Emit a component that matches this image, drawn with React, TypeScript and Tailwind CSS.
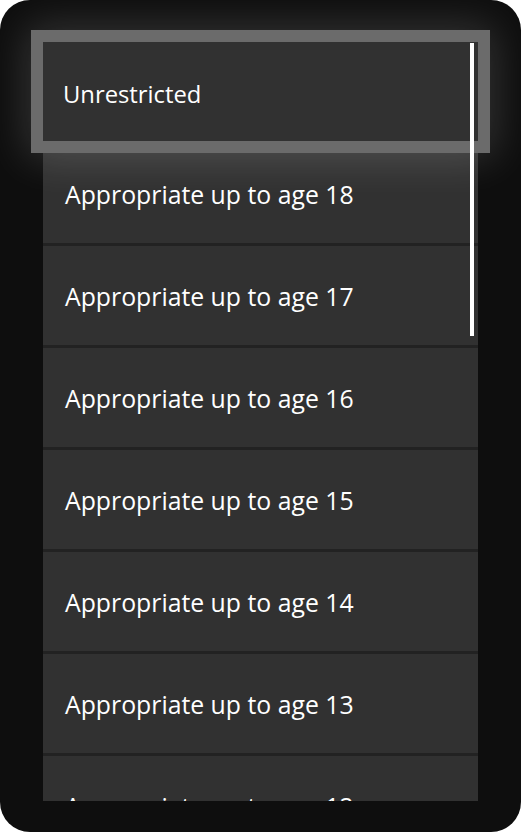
const ratings = [
  "Unrestricted",
  "Appropriate up to age 18",
  "Appropriate up to age 17",
  "Appropriate up to age 16",
  "Appropriate up to age 15",
  "Appropriate up to age 14",
  "Appropriate up to age 13",
  "Appropriate up to age 12",
]

export default function App() {
  return (
    <div className="w-[521px] h-[832px] bg-white" style={{ fontFamily: '"Open Sans", "Noto Sans", sans-serif' }}>
      <div className="relative w-full h-full rounded-[30px] bg-[#0e0e0e] overflow-hidden">
        <div className="relative h-[801px] overflow-hidden px-[43px] pt-[42px]">
          <ul className="flex flex-col gap-[3px] bg-[#222222]">
            {ratings.map((label, i) => {
              const focused = i === 0
              return (
                <li
                  key={label}
                  className={
                    focused
                      ? "relative z-10 h-[99px] shrink-0 flex items-center pl-[20px] pt-[6px] bg-[#313131] text-white text-[23.8px] outline-[12px] outline-solid outline-[#6b6b6b] shadow-[0_0_40px_16px_rgba(255,255,255,0.17)]"
                      : "h-[99px] shrink-0 flex items-center pl-[22px] pt-[2px] bg-[#313131] text-white text-[24.8px]"
                  }
                >
                  {label}
                </li>
              )
            })}
          </ul>
          <div className="absolute z-20 left-[470px] top-[43px] w-[4px] h-[293px] bg-white" />
        </div>
      </div>
    </div>
  )
}
